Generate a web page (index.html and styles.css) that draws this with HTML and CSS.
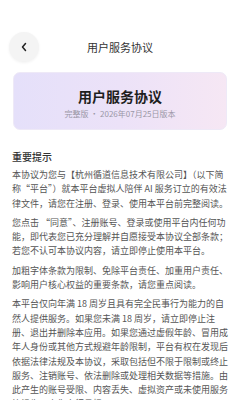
FILE: index.html
```html
<!DOCTYPE html>
<html lang="zh-CN">
<head>
  <meta charset="UTF-8">
  <meta name="viewport" content="width=device-width, initial-scale=1.0">
  <title>用户服务协议</title>
  <link rel="stylesheet" href="styles.css">
</head>
<body>
  <div class="page">
    <header class="topbar">
      <button class="back" aria-label="返回">
        <svg width="8" height="10" viewBox="0 0 8 10">
          <path d="M5.5 1.5 L2.5 5 L5.5 8.5" fill="none" stroke="#222" stroke-width="1.5" stroke-linecap="round" stroke-linejoin="round"/>
        </svg>
      </button>
      <h1 class="topbar-title">用户服务协议</h1>
      <span></span>
    </header>

    <section class="hero">
      <h2>用户服务协议</h2>
      <p class="version">完整版 · 2026年07月25日版本</p>
    </section>

    <section class="content">
      <h3>重要提示</h3>
      <p>本协议为您与【杭州循道信息技术有限公司】（以下简称“平台”）就本平台虚拟人陪伴 AI 服务订立的有效法律文件，请您在注册、登录、使用本平台前完整阅读。</p>
      <p>您点击 “同意”、注册账号、登录或使用平台内任何功能，即代表您已充分理解并自愿接受本协议全部条款；若您不认可本协议内容，请立即停止使用本平台。</p>
      <p>加粗字体条款为限制、免除平台责任、加重用户责任、影响用户核心权益的重要条款，请您重点阅读。</p>
      <p>本平台仅向年满 18 周岁且具有完全民事行为能力的自然人提供服务。如果您未满 18 周岁，请立即停止注册、退出并删除本应用。如果您通过虚假年龄、冒用成年人身份或其他方式规避年龄限制，平台有权在发现后依据法律法规及本协议，采取包括但不限于限制或终止服务、注销账号、依法删除或处理相关数据等措施。由此产生的账号受限、内容丢失、虚拟资产或未使用服务等损失，由您自行承担。</p>
    </section>
  </div>
</body>
</html>
```

FILE: styles.css
```css
* {
  box-sizing: border-box;
}

body {
  margin: 0;
  background-color: #fff;
  font-family: "Noto Sans CJK SC", "Noto Sans", sans-serif;
  color: #333;
}

.page {
  width: 240px;
  overflow: hidden;
}

.topbar {
  display: grid;
  grid-template-columns: 30px 1fr 30px;
  align-items: center;
  height: 30px;
  margin-top: 32px;
  padding: 0 9px;
}

.back {
  width: 30px;
  height: 30px;
  padding: 0;
  border: none;
  border-radius: 50%;
  background-color: #f4f4f4;
  box-shadow: 0 1px 3px rgba(0, 0, 0, 0.06);
  display: flex;
  align-items: center;
  justify-content: center;
}

.topbar-title {
  margin: 0;
  text-align: center;
  font-size: 11px;
  font-weight: 400;
  color: #333;
}

.hero {
  margin: 10px 13px 0;
  height: 58px;
  padding-top: 13px;
  border-radius: 7px;
  border: 1px solid #eee9f7;
  background: linear-gradient(90deg, #e5e0fa 0%, #ece2f8 50%, #f6e7f4 100%);
  text-align: center;
}

.hero h2 {
  margin: 0;
  font-size: 14px;
  line-height: 20px;
  font-weight: 700;
  color: #1e1e1e;
}

.version {
  margin: 2px 0 0;
  font-size: 8px;
  line-height: 12px;
  color: #9a97a6;
}

.content {
  padding: 0 12px;
  margin-top: 20px;
}

.content h3 {
  margin: 0 0 4px;
  font-size: 10px;
  line-height: 14px;
  font-weight: 500;
  color: #333;
}

.content p {
  margin: 0 0 5px;
  font-size: 9px;
  line-height: 14.3px;
  color: #555;
}
```
